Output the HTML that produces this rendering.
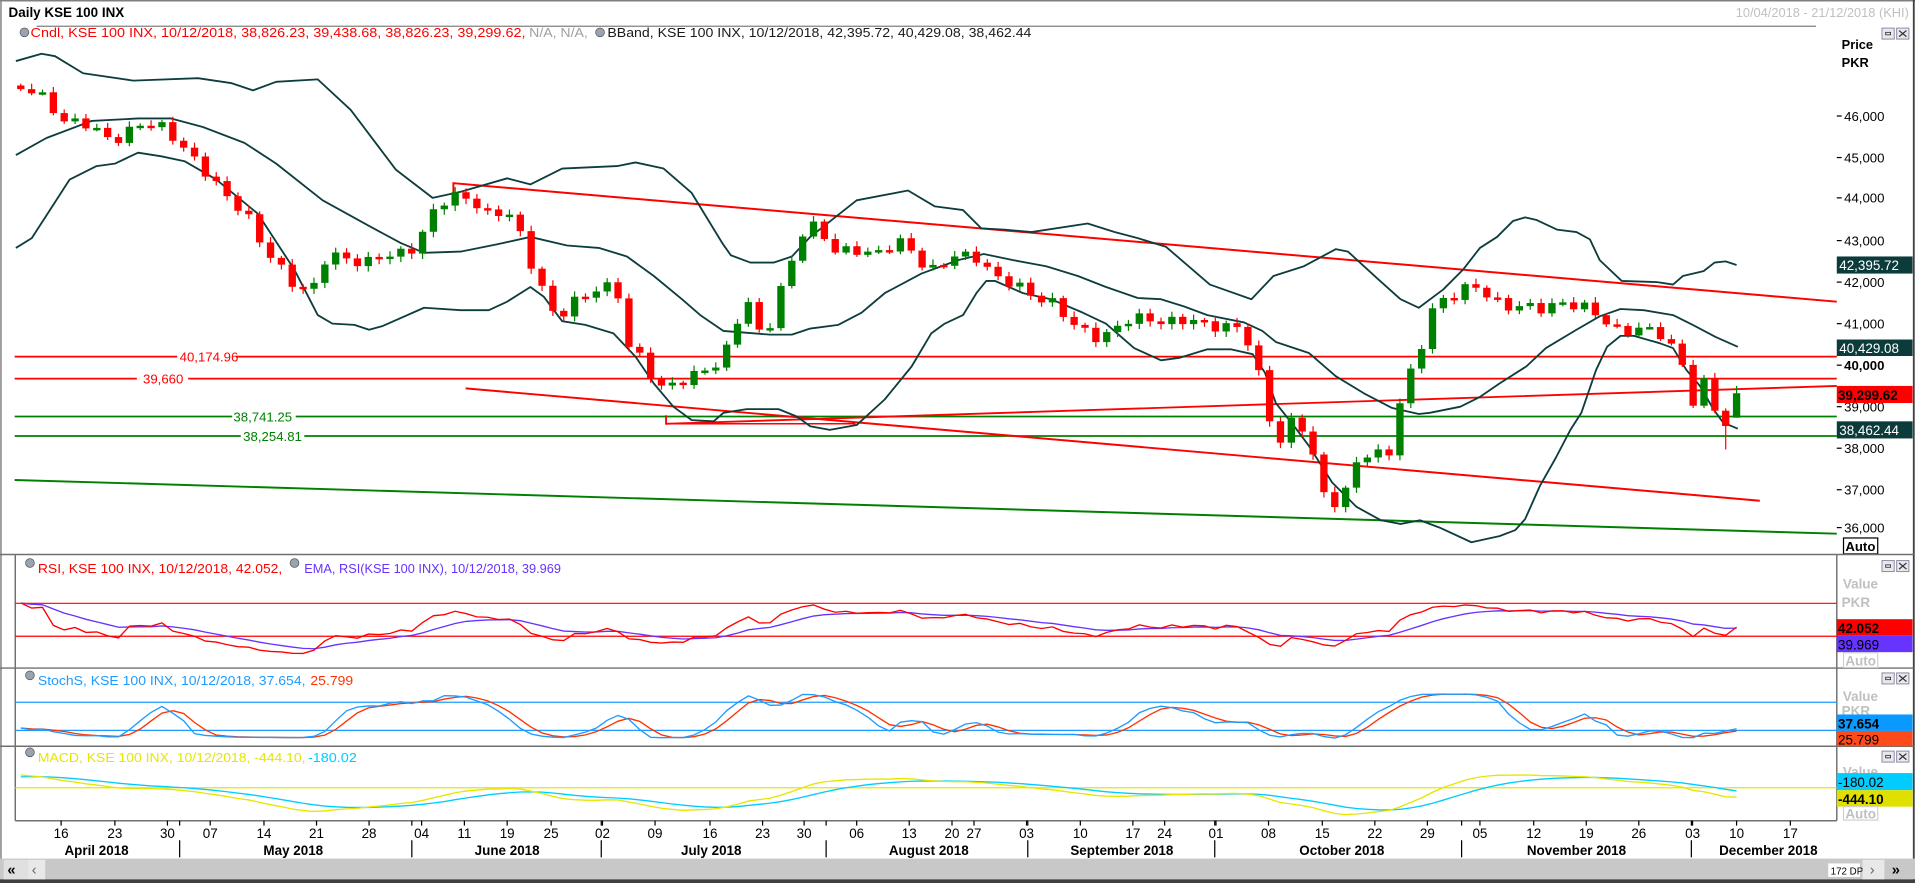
<!DOCTYPE html>
<html><head><meta charset="utf-8"><style>
html,body{margin:0;padding:0;background:#fff;overflow:hidden}
svg{display:block}
text{font-family:"Liberation Sans","DejaVu Sans",sans-serif}
</style></head><body>
<svg id="s" xmlns="http://www.w3.org/2000/svg" width="1915" height="883" viewBox="0 0 1567 723" preserveAspectRatio="none">
<rect x="0" y="0" width="1567" height="723" fill="#fff"/>
<line x1="0" y1="0.6" x2="1567" y2="0.6" stroke="#808080" stroke-width="1.2"/>
<line x1="0.8" y1="0" x2="0.8" y2="723" stroke="#808080" stroke-width="1.2"/>
<line x1="1566" y1="0" x2="1566" y2="723" stroke="#404040" stroke-width="1.5"/>
<text x="7" y="14" font-size="11" font-weight="bold" fill="#000">Daily KSE 100 INX</text>
<text x="1562" y="14" font-size="10.5" fill="#c0c0c0" text-anchor="end">10/04/2018 - 21/12/2018 (KHI)</text>
<line x1="30" y1="21.5" x2="1486" y2="21.5" stroke="#808080" stroke-width="1"/>
<g id="btns"></g>
<g font-size="10.8">
<circle cx="20" cy="26.5" r="3.6" fill="#9aa3b0" stroke="#555" stroke-width=".6"/>
<text x="25" y="30.5" fill="#ff0000" textLength="405" lengthAdjust="spacingAndGlyphs">Cndl, KSE 100 INX, 10/12/2018, 38,826.23, 39,438.68, 38,826.23, 39,299.62,</text>
<text x="433" y="30.5" fill="#a0a0a0" textLength="48" lengthAdjust="spacingAndGlyphs">N/A, N/A,</text>
<circle cx="491" cy="26.5" r="3.6" fill="#9aa3b0" stroke="#555" stroke-width=".6"/>
<text x="497" y="30.5" fill="#1a1a1a" textLength="347" lengthAdjust="spacingAndGlyphs">BBand, KSE 100 INX, 10/12/2018, 42,395.72, 40,429.08, 38,462.44</text>
<circle cx="24.5" cy="461" r="3.6" fill="#9aa3b0" stroke="#555" stroke-width=".6"/>
<text x="31" y="469" fill="#ff0000" textLength="200" lengthAdjust="spacingAndGlyphs">RSI, KSE 100 INX, 10/12/2018, 42.052,</text>
<circle cx="241" cy="461" r="3.6" fill="#9aa3b0" stroke="#555" stroke-width=".6"/>
<text x="249" y="469" fill="#6633ff" textLength="210" lengthAdjust="spacingAndGlyphs">EMA, RSI(KSE 100 INX), 10/12/2018, 39.969</text>
<circle cx="24.5" cy="553" r="3.6" fill="#9aa3b0" stroke="#555" stroke-width=".6"/>
<text x="31" y="561" fill="#1e9bff" textLength="219" lengthAdjust="spacingAndGlyphs">StochS, KSE 100 INX, 10/12/2018, 37.654,</text>
<text x="254" y="561" fill="#ff3300" textLength="35" lengthAdjust="spacingAndGlyphs">25.799</text>
<circle cx="24.5" cy="616" r="3.6" fill="#9aa3b0" stroke="#555" stroke-width=".6"/>
<text x="31" y="624" fill="#e6e600" textLength="219" lengthAdjust="spacingAndGlyphs">MACD, KSE 100 INX, 10/12/2018, -444.10,</text>
<text x="252" y="624" fill="#00ccff" textLength="40" lengthAdjust="spacingAndGlyphs">-180.02</text>
</g>
<line x1="12" y1="292" x2="1503" y2="292" stroke="#ff0000" stroke-width="1.4"/>
<rect x="145" y="285" width="48" height="14" fill="#fff"/>
<text x="147" y="296" font-size="10.8" fill="#ff0000">40,174.96</text>
<line x1="12" y1="310" x2="1503" y2="310" stroke="#ff0000" stroke-width="1.4"/>
<rect x="112" y="303" width="42" height="14" fill="#fff"/>
<text x="117" y="314" font-size="10.8" fill="#ff0000">39,660</text>
<line x1="12" y1="341" x2="1503" y2="341" stroke="#008000" stroke-width="1.4"/>
<rect x="190" y="334" width="52" height="14" fill="#fff"/>
<text x="191" y="345" font-size="10.8" fill="#008000">38,741.25</text>
<line x1="12" y1="357" x2="1503" y2="357" stroke="#008000" stroke-width="1.4"/>
<rect x="197" y="350" width="52" height="14" fill="#fff"/>
<text x="199" y="361" font-size="10.8" fill="#008000">38,254.81</text>
<polyline points="371,158 371,150 1503,247" fill="none" stroke="#ff0000" stroke-width="1.6"/>
<line x1="381" y1="318" x2="1440" y2="410" stroke="#ff0000" stroke-width="1.6"/>
<polyline points="545,340 545,347 1503,316" fill="none" stroke="#ff0000" stroke-width="1.5"/>
<line x1="545" y1="347" x2="700" y2="347" stroke="#ff0000" stroke-width="1.2"/>
<line x1="12" y1="393" x2="1503" y2="437" stroke="#008000" stroke-width="1.6"/>
<g fill="none" stroke="#0d3d3d" stroke-width="1.5" stroke-linejoin="round">
<polyline points="13,50 34,44 45,46 68,60 109,66 162,64 189,68 207,74 226,67 260,65 287,90 324,139 354,162 377,157 415,146 434,151 460,138 505,136 520,133 543,138 566,158 591,199 598,209 614,215 633,215 648,210 663,194 701,164 743,156 765,169 788,172 803,187 822,188 844,190 890,183 912,190 931,195 954,202 990,233 1024,245 1042,226 1067,218 1093,204 1103,206 1127,228 1146,245 1161,252 1181,237 1197,221 1211,203 1225,194 1238,181 1248,178 1257,180 1274,188 1290,190 1301,196 1309,213 1327,230 1356,231 1369,233 1377,226 1394,222 1403,215 1412,214 1421,217"/>
<polyline points="13,127 38,113 75,99 113,97 140,97 166,104 200,117 226,134 264,164 302,185 328,199 347,207 377,206 407,200 434,194 464,201 490,203 513,210 535,226 558,245 573,258 592,271 630,274 648,274 663,269 686,266 705,256 724,240 754,224 784,213 805,208 829,213 856,218 882,226 905,235 931,244 950,245 969,251 988,258 1018,264 1033,271 1044,280 1071,289 1093,308 1116,322 1139,334 1161,339 1170,338 1195,333 1211,325 1227,314 1249,300 1265,285 1290,270 1309,259 1326,253 1345,254 1369,258 1385,266 1404,276 1422,284"/>
<polyline points="13,203 26,195 57,147 79,136 94,134 113,125 132,128 151,132 177,147 211,175 241,221 260,258 272,265 290,266 302,270 313,267 347,252 377,254 400,254 415,247 434,235 445,243 460,263 479,266 502,273 520,292 535,314 551,333 566,344 584,345 592,338 611,335 637,335 652,341 663,349 679,352 701,348 724,327 746,300 762,273 773,265 788,258 799,240 807,230 814,230 837,240 860,245 886,256 905,265 928,285 950,295 965,293 988,286 1007,286 1025,290 1035,305 1044,330 1059,349 1071,365 1090,395 1110,415 1130,426 1146,429 1162,426 1178,432 1204,444 1227,439 1240,434 1248,425 1260,398 1273,375 1285,352 1294,338 1306,303 1315,284 1326,275 1337,275 1358,281 1369,285 1380,303 1391,316 1402,335 1410,346 1422,351"/>
</g>
<g id="cand"></g>
<g font-size="10.8" fill="#000" id="pax"></g>
<text x="1507" y="40" font-size="10.5" font-weight="bold">Price</text>
<text x="1507" y="55" font-size="10.5" font-weight="bold">PKR</text>
<rect x="1503" y="210" width="62" height="14" fill="#0b3b3b"/><text x="1505" y="221" font-size="11" fill="#fff">42,395.72</text>
<rect x="1503" y="278" width="62" height="13.5" fill="#0b3b3b"/><text x="1505" y="289" font-size="11" fill="#fff">40,429.08</text>
<rect x="1503" y="316" width="62" height="14" fill="#ff0000"/><text x="1504" y="327.5" font-size="11" font-weight="bold" fill="#000">39,299.62</text>
<rect x="1503" y="345" width="62" height="14" fill="#0b3b3b"/><text x="1505" y="356" font-size="11" fill="#fff">38,462.44</text>
<rect x="1508.5" y="440.5" width="28" height="13" fill="#fff" stroke="#000" stroke-width="1"/>
<text x="1510" y="451" font-size="10.8" font-weight="bold">Auto</text>
<g stroke="#707070" stroke-width="1.2">
<line x1="0" y1="454" x2="1503" y2="454"/>
<line x1="0" y1="547" x2="1503" y2="547"/>
<line x1="0" y1="611" x2="1503" y2="611"/>
<line x1="12.5" y1="454" x2="12.5" y2="672"/>
<line x1="12.5" y1="672" x2="1503" y2="672"/>
<line x1="1503" y1="454" x2="1503" y2="672"/>
<line x1="1503" y1="454" x2="1566" y2="454"/>
<line x1="1503" y1="547" x2="1566" y2="547"/>
<line x1="1503" y1="611" x2="1566" y2="611"/>
</g>
<line x1="12.5" y1="494" x2="1503" y2="494" stroke="#ff0000" stroke-width="1"/>
<line x1="12.5" y1="521" x2="1503" y2="521" stroke="#ff0000" stroke-width="1"/>
<line x1="12.5" y1="575" x2="1503" y2="575" stroke="#1e9bff" stroke-width="1"/>
<line x1="12.5" y1="598" x2="1503" y2="598" stroke="#1e9bff" stroke-width="1"/>
<line x1="12.5" y1="645" x2="1503" y2="645" stroke="#e6e600" stroke-width="1"/>
<g id="ind"></g>
<g font-size="11">
<text x="1508" y="482" fill="#c0c0c0" font-weight="bold">Value</text>
<text x="1507" y="497" fill="#c0c0c0" font-weight="bold">PKR</text>
<rect x="1503" y="507" width="62" height="13.5" fill="#ff0000"/><text x="1504" y="518.5" font-weight="bold" fill="#000">42.052</text>
<rect x="1503" y="520.5" width="62" height="13.5" fill="#6633ff"/><text x="1504" y="532" fill="#000">39.969</text>
<rect x="1508.5" y="534.5" width="28" height="12" fill="#fff" stroke="#d0d0d0"/><text x="1510" y="545" fill="#c0c0c0" font-weight="bold">Auto</text>
<text x="1508" y="574" fill="#c0c0c0" font-weight="bold">Value</text>
<text x="1507" y="586" fill="#c0c0c0" font-weight="bold">PKR</text>
<rect x="1503" y="585" width="62" height="13.5" fill="#0a9aff"/><text x="1504" y="596.5" font-weight="bold" fill="#000">37.654</text>
<rect x="1503" y="598.5" width="62" height="12.5" fill="#ff4a1a"/><text x="1504" y="609.5" fill="#000">25.799</text>
<text x="1508" y="636" fill="#c0c0c0" font-weight="bold">Value</text>
<rect x="1503" y="633" width="62" height="14" fill="#00ccff"/><text x="1504" y="644.5" fill="#000">-180.02</text>
<rect x="1503" y="647" width="62" height="13.5" fill="#e0e000"/><text x="1504" y="658.5" font-weight="bold" fill="#000">-444.10</text>
<rect x="1508.5" y="660.5" width="28" height="11" fill="#fff" stroke="#d0d0d0"/><text x="1510" y="670" fill="#c0c0c0" font-weight="bold">Auto</text>
</g>
<g id="xax" font-size="11"></g>
<g font-size="11" font-weight="bold" text-anchor="middle">
<text x="79" y="700">April 2018</text>
<text x="240" y="700">May 2018</text>
<text x="415" y="700">June 2018</text>
<text x="582" y="700">July 2018</text>
<text x="760" y="700">August 2018</text>
<text x="918" y="700">September 2018</text>
<text x="1098" y="700">October 2018</text>
<text x="1290" y="700">November 2018</text>
<text x="1447" y="700">December 2018</text>
</g>
<g stroke="#000" stroke-width="1">
<line x1="147" y1="688" x2="147" y2="702"/>
<line x1="337" y1="688" x2="337" y2="702"/>
<line x1="492" y1="688" x2="492" y2="702"/>
<line x1="676" y1="688" x2="676" y2="702"/>
<line x1="841" y1="688" x2="841" y2="702"/>
<line x1="994" y1="688" x2="994" y2="702"/>
<line x1="1196" y1="688" x2="1196" y2="702"/>
<line x1="1384" y1="688" x2="1384" y2="702"/>
</g>
<rect x="0" y="703" width="1567" height="17" fill="#c8c8c8"/>
<rect x="0" y="720" width="1567" height="3" fill="#404040"/>
<rect x="3" y="704" width="20" height="16" fill="#e0e0e0"/>
<text x="6" y="716" font-size="12" font-weight="bold">«</text>
<rect x="23" y="704" width="14" height="16" fill="#e8e8e8"/>
<text x="26" y="716" font-size="12" fill="#666">‹</text>
<rect x="1496" y="707" width="26" height="11" fill="#fff"/>
<text x="1498" y="716" font-size="8">172 DP</text>
<rect x="1524" y="704" width="18" height="16" fill="#e8e8e8"/>
<text x="1530" y="716" font-size="12" fill="#666">›</text>
<text x="1548" y="716" font-size="12" font-weight="bold">»</text>
</svg>
<script>
(function(){
var NS='http://www.w3.org/2000/svg';
function el(p,t,a){var e=document.createElementNS(NS,t);for(var k in a)e.setAttribute(k,a[k]);p.appendChild(e);return e;}
var b=document.getElementById('btns');
[[1540,23],[1540,459],[1540,551],[1540,615]].forEach(function(q){
 var x=q[0],y=q[1];
 el(b,'rect',{x:x,y:y,width:10,height:9,fill:'#e8e8ee',stroke:'#8a8aa0','stroke-width':.8});
 el(b,'rect',{x:x+3,y:y+3.5,width:4,height:2,fill:'none',stroke:'#333','stroke-width':.7});
 el(b,'rect',{x:x+12,y:y,width:10,height:9,fill:'#e8e8ee',stroke:'#8a8aa0','stroke-width':.8});
 el(b,'path',{d:'M'+(x+14)+' '+(y+2)+'L'+(x+20)+' '+(y+7)+'M'+(x+20)+' '+(y+2)+'L'+(x+14)+' '+(y+7),stroke:'#333','stroke-width':1});
});
var pa=document.getElementById('pax');
var pl=[[46000,95],[45000,129],[44000,162],[43000,197],[42000,231],[41000,265],[40000,299],[39000,333],[38000,367],[37000,401],[36000,432]];
pl.forEach(function(q){
 el(pa,'line',{x1:1503,y1:q[1],x2:1507,y2:q[1],stroke:'#000','stroke-width':1});
 var t=el(pa,'text',{x:1509,y:q[1]+4});
 if(q[0]==40000)t.setAttribute('font-weight','bold');
 t.textContent=q[0].toLocaleString('en-US');
});
var xa=document.getElementById('xax');
var days=[['16',50],['23',94],['30',137],['07',172],['14',216],['21',259],['28',302],['04',345],['11',380],['19',415],['25',451],['02',493],['09',536],['16',581],['23',624],['30',658],['06',701],['13',744],['20',779],['27',797],['03',840],['10',884],['17',927],['24',953],['01',995],['08',1038],['15',1082],['22',1125],['29',1168],['05',1211],['12',1255],['19',1298],['26',1341],['03',1385],['10',1421],['17',1465]];
days.forEach(function(d){
 el(xa,'line',{x1:d[1],y1:672,x2:d[1],y2:676,stroke:'#000','stroke-width':1});
 var t=el(xa,'text',{x:d[1],y:686,'text-anchor':'middle'});t.textContent=d[0];
});
[147,337,492,676,841,994,1196,1384].forEach(function(x){el(xa,'line',{x1:x,y1:672,x2:x,y2:676,stroke:'#000','stroke-width':1});});
var W=[[17,73],[30,77],[50,95],[70,103],[90,115],[110,103],[135,105],[150,118],[165,140],[185,160],[200,170],[215,205],[240,230],[255,240],[268,210],[285,210],[300,215],[320,210],[340,200],[355,175],[370,160],[385,160],[400,178],[420,175],[433,210],[445,240],[455,265],[470,245],[490,235],[505,240],[515,285],[525,290],[540,320],[555,315],[575,300],[590,300],[600,275],[610,240],[625,280],[635,250],[650,210],[660,180],[670,185],[685,210],[700,205],[720,205],[740,200],[760,220],[780,212],[800,210],[820,230],[840,240],[860,245],[880,270],[900,275],[920,265],[940,260],[955,262],[975,265],[1000,265],[1015,270],[1025,290],[1035,325],[1045,365],[1055,345],[1070,355],[1080,400],[1090,410],[1100,405],[1110,380],[1125,370],[1135,375],[1145,330],[1155,305],[1165,280],[1175,245],[1190,240],[1205,235],[1220,245],[1240,250],[1260,255],[1280,245],[1300,255],[1320,268],[1340,270],[1360,275],[1375,290],[1385,330],[1395,315],[1405,340],[1413,348],[1421,322]];
function ip(x){for(var i=0;i<W.length-1;i++){if(x<=W[i+1][0]){var t=(x-W[i][0])/(W[i+1][0]-W[i][0]);return W[i][1]+t*(W[i+1][1]-W[i][1]);}}return W[W.length-1][1];}
var N=159,xs=[],cl=[],hi=[],lo=[];
for(var i=0;i<N;i++){var x=17+i*1404/(N-1);xs.push(x);cl.push(ip(x)+4*Math.sin(i*2.3)+2.5*Math.sin(i*5.1));}
cl[N-1]=322;
var cg=document.getElementById('cand');
for(var i=0;i<N;i++){
 var o=i>0?cl[i-1]:cl[0]-3,c=cl[i];
 var top=Math.min(o,c)-(1.5+3*Math.abs(Math.sin(i*1.7))),bot=Math.max(o,c)+(1.5+3*Math.abs(Math.sin(i*3.1)));
 if(i==N-1){top=316;bot=342;o=342;}
 if(i==N-2){bot=368;}
 hi.push(top);lo.push(bot);
 var col=c<o?'#008000':'#ff0000';
 el(cg,'line',{x1:xs[i],y1:top,x2:xs[i],y2:bot,stroke:col,'stroke-width':1});
 var h=Math.max(Math.abs(c-o),2);
 el(cg,'rect',{x:xs[i]-3,y:Math.min(o,c),width:6,height:h,fill:col});
}
function P(y){return 46000-(y-95)/0.0337;}
var p=cl.map(P),ph=hi.map(P),pl2=lo.map(P);
var ag=60,al=25,rsi=[],ema=[],e=70;
for(var i=0;i<N;i++){var d=i>0?p[i]-p[i-1]:0;ag=(ag*13+Math.max(d,0))/14;al=(al*13+Math.max(-d,0))/14;var r=100-100/(1+ag/al);rsi.push(r);e=e+0.2*(r-e);ema.push(e);}
var raw=[];
for(var i=0;i<N;i++){var mx=-1e9,mn=1e9;for(var j=Math.max(0,i-6);j<=i;j++){mx=Math.max(mx,ph[j]);mn=Math.min(mn,pl2[j]);}raw.push(mx-mn<1?50:(p[i]-mn)/(mx-mn)*100);}
function sma(a,n){return a.map(function(v,i){var s=0,c=0;for(var j=Math.max(0,i-n+1);j<=i;j++){s+=a[j];c++;}return s/c;});}
var sk=sma(raw,3),sd=sma(sk,3);
var e12=p[0],e26=p[0]-600,sg=450,mac=[],sig=[];
for(var i=0;i<N;i++){e12+=2/13*(p[i]-e12);e26+=2/27*(p[i]-e26);var m=e12-e26;sg+=0.2*(m-sg);mac.push(m);sig.push(sg);}
var mm=0;mac.concat(sig).forEach(function(v){mm=Math.max(mm,Math.abs(v));});
var ig=document.getElementById('ind');
function line(arr,f,col){var s=arr.map(function(v,i){return xs[i].toFixed(1)+','+f(v).toFixed(1);}).join(' ');el(ig,'polyline',{points:s,fill:'none',stroke:col,'stroke-width':1.1});}
line(ema,function(v){return 521-(v-30)*27/40;},'#6633ff');
line(rsi,function(v){return 521-(v-30)*27/40;},'#ff0000');
line(sd,function(v){return 598-(v-20)*23/60;},'#ff3300');
line(sk,function(v){return 598-(v-20)*23/60;},'#1e9bff');
line(sig,function(v){return 645-v*22/mm;},'#00ccff');
line(mac,function(v){return 645-v*22/mm;},'#e6e600');
})();
</script>
</body></html>
